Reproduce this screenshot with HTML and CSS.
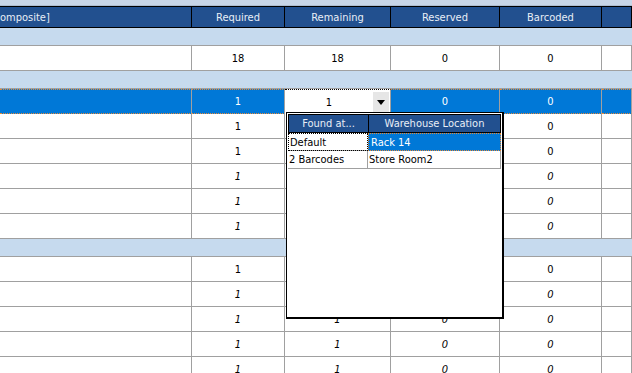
FILE: index.html
```html
<!DOCTYPE html>
<html lang="en">
<head>
  <meta charset="UTF-8" />
  <title>Pick List</title>
  <link rel="stylesheet" href="styles.css">
</head>
<body>
  <div class="grid">
    <div class="topbar"></div>

    <div class="row head">
      <div class="cell name">omposite]</div>
      <div class="cell">Required</div>
      <div class="cell">Remaining</div>
      <div class="cell">Reserved</div>
      <div class="cell">Barcoded</div>
      <div class="cell"></div>
    </div>

    <div class="row group"></div>
    <div class="row">
      <div class="cell"></div><div class="cell">18</div><div class="cell">18</div><div class="cell">0</div><div class="cell">0</div><div class="cell"></div>
    </div>

    <div class="row group"></div>
    <div class="row selected">
      <div class="cell"></div>
      <div class="cell">1</div>
      <div class="cell editor">
        <span class="editor-value">1</span>
        <span class="drop-btn"><span class="arrow"></span></span>
      </div>
      <div class="cell">0</div>
      <div class="cell">0</div>
      <div class="cell"></div>
    </div>
    <!-- Remaining / Reserved of the next rows sit under the dropdown -->
    <div class="row">
      <div class="cell"></div><div class="cell">1</div><div class="cell"></div><div class="cell"></div><div class="cell">0</div><div class="cell"></div>
    </div>
    <div class="row">
      <div class="cell"></div><div class="cell">1</div><div class="cell"></div><div class="cell"></div><div class="cell">0</div><div class="cell"></div>
    </div>
    <div class="row calc">
      <div class="cell"></div><div class="cell">1</div><div class="cell"></div><div class="cell"></div><div class="cell">0</div><div class="cell"></div>
    </div>
    <div class="row calc">
      <div class="cell"></div><div class="cell">1</div><div class="cell"></div><div class="cell"></div><div class="cell">0</div><div class="cell"></div>
    </div>
    <div class="row calc">
      <div class="cell"></div><div class="cell">1</div><div class="cell"></div><div class="cell"></div><div class="cell">0</div><div class="cell"></div>
    </div>

    <div class="row group"></div>
    <div class="row">
      <div class="cell"></div><div class="cell">1</div><div class="cell"></div><div class="cell"></div><div class="cell">0</div><div class="cell"></div>
    </div>
    <div class="row calc">
      <div class="cell"></div><div class="cell">1</div><div class="cell"></div><div class="cell"></div><div class="cell">0</div><div class="cell"></div>
    </div>
    <div class="row calc">
      <div class="cell"></div><div class="cell">1</div><div class="cell">1</div><div class="cell">0</div><div class="cell">0</div><div class="cell"></div>
    </div>
    <div class="row calc">
      <div class="cell"></div><div class="cell">1</div><div class="cell">1</div><div class="cell">0</div><div class="cell">0</div><div class="cell"></div>
    </div>
    <div class="row calc">
      <div class="cell"></div><div class="cell">1</div><div class="cell">1</div><div class="cell">0</div><div class="cell">0</div><div class="cell"></div>
    </div>

    <!-- location dropdown for the Remaining editor -->
    <div class="popup">
      <div class="pop-row pop-head">
        <div class="pop-cell">Found at...</div>
        <div class="pop-cell">Warehouse Location</div>
      </div>
      <div class="pop-row">
        <div class="pop-cell focus">Default</div>
        <div class="pop-cell chosen">Rack 14</div>
      </div>
      <div class="pop-row">
        <div class="pop-cell">2 Barcodes</div>
        <div class="pop-cell">Store Room2</div>
      </div>
    </div>
  </div>
</body>
</html>
```

FILE: styles.css
```css
body {
  margin: 0;
  background: #fff;
  font-family: "DejaVu Sans Condensed", "Liberation Sans", sans-serif;
  font-size: 11px;
  color: #000;
  overflow: hidden;
}

.grid {
  position: relative;
  width: 632px;
  height: 373px;
  overflow: hidden;
}

.topbar {
  height: 6px;
  box-sizing: border-box;
  background: #c9d6e7;
  border-bottom: 1px solid #aebdd0;
}

.row {
  display: grid;
  grid-template-columns: 192px 93px 106px 109px 102px 1fr;
  height: 25px;
  box-sizing: border-box;
  border-bottom: 1px solid #a0a0a0;
}

.cell {
  display: flex;
  align-items: center;
  justify-content: center;
  border-right: 1px solid #a0a0a0;
  white-space: nowrap;
  overflow: hidden;
}

.head {
  height: 22px;
  background: #22508f;
  color: #e9eef6;
  border-top: 1px solid #000;
  border-bottom: 1px solid #000;
}

.head .cell {
  border-right-color: #000;
}

.head .name {
  justify-content: flex-start;
}

.group {
  display: block;
  height: 18px;
  background: #c6daee;
}

.calc .cell {
  font-style: italic;
}

.selected .cell {
  background: #0078d7;
  color: #fff;
  border-top: 1px dotted #e58a3a;
  border-bottom: 1px dotted #e58a3a;
  margin-bottom: -1px;
}

.selected .editor {
  background: #fff;
  color: #000;
  border-top: 1px dotted #000;
  border-bottom: none;
  justify-content: flex-start;
  padding: 0 1px 0 0;
}

.editor-value {
  flex: 1;
  text-align: center;
}

.drop-btn {
  width: 16px;
  height: 21px;
  background: #e6e6e6;
  display: flex;
  align-items: center;
  justify-content: center;
}

.arrow {
  width: 0;
  height: 0;
  border-left: 4px solid transparent;
  border-right: 4px solid transparent;
  border-top: 5px solid #000;
}

.popup {
  position: absolute;
  left: 286px;
  top: 112px;
  width: 218px;
  height: 207px;
  box-sizing: border-box;
  border: 1px solid #000;
  border-right-width: 2px;
  border-bottom-width: 2px;
  padding: 1px;
  background: #fff;
}

.pop-row {
  display: grid;
  grid-template-columns: 80px 1fr;
  height: 18px;
  box-sizing: border-box;
  border-bottom: 1px solid #a0a0a0;
}

.pop-head {
  height: 19px;
  background: #22508f;
  color: #e9eef6;
  border: 1px solid #000;
}

.pop-cell {
  display: flex;
  align-items: center;
  padding-left: 1px;
  border-right: 1px solid #a0a0a0;
  white-space: nowrap;
  overflow: hidden;
}

.pop-head .pop-cell {
  justify-content: center;
  padding-left: 0;
  border-right-color: #000;
}

.pop-head .pop-cell:last-child {
  border-right: none;
}

.pop-cell.focus {
  border: 1px dotted #000;
  margin-bottom: -1px;
}

.pop-cell.chosen {
  background: #0078d7;
  color: #fff;
  border: 1px dotted #e58a3a;
  margin-bottom: -1px;
  padding-left: 2px;
}
```
